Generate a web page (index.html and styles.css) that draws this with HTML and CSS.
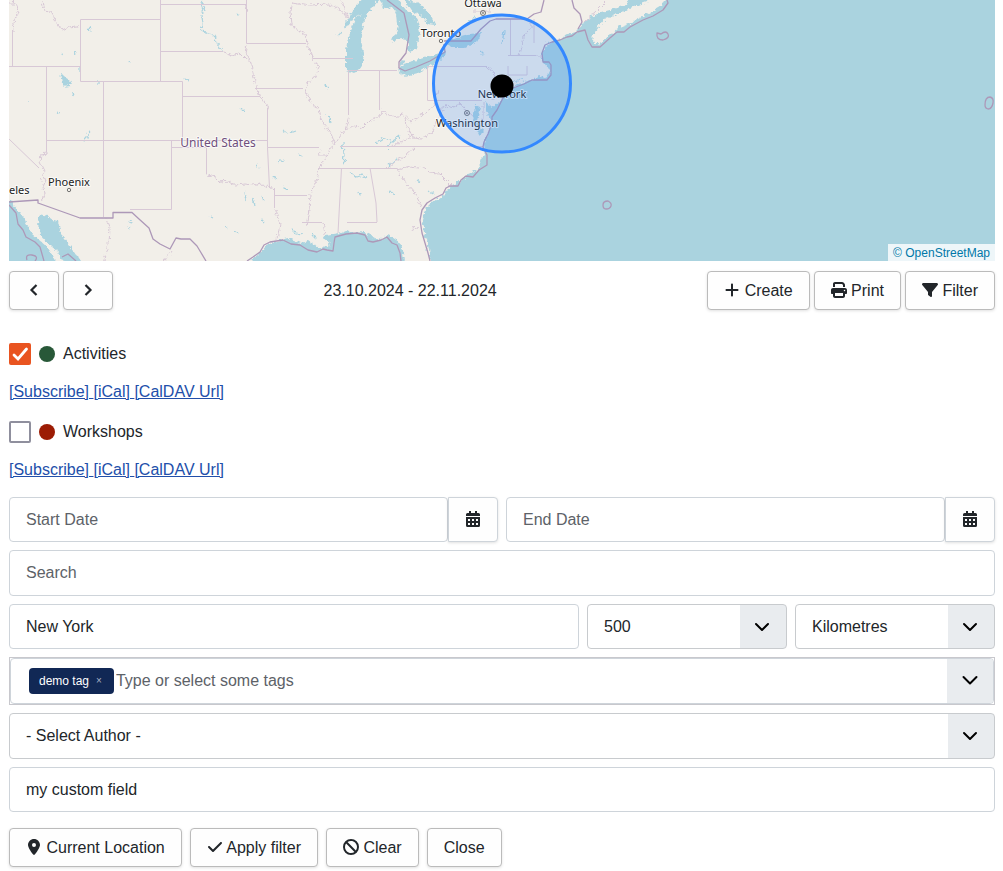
FILE: index.html
```html
<!DOCTYPE html>
<html lang="en">
<head>
<meta charset="utf-8">
<meta name="viewport" content="width=device-width, initial-scale=1">
<title>Event calendar</title>
<link rel="stylesheet" href="styles.css">
</head>
<body>
<main class="calendar">
  <section class="map" aria-label="Map">
    <svg class="map-canvas" viewBox="9 0 986 261" preserveAspectRatio="xMidYMid slice" role="img" aria-label="Search radius around New York">
      <defs>
        <!-- roughens coastlines and river borders -->
        <filter id="rough" filterUnits="userSpaceOnUse" x="-20" y="-20" width="1040" height="310">
          <feTurbulence type="turbulence" baseFrequency="0.18" numOctaves="2" seed="4" result="noise"/>
          <feDisplacementMap in="SourceGraphic" in2="noise" scale="5" xChannelSelector="R" yChannelSelector="G"/>
        </filter>
      </defs>
      <rect class="land" x="9" y="0" width="986" height="261"/>
      <!-- oceans -->
      <g class="water" filter="url(#rough)">
        <path d="M432 275L430 261 428 247 425 235 421 219 424 208 430 202 443 193 450 184 458 181 466 173 474 170 480 165 478 158 484 152 482 144 487 130 489 118 484 109 484 101 490 107 498 101 503 96 510 88 517 83 530 79 538 74 545 77 549 72 544 63 541 59 541 52 546 43 556 38 562 36 568 33 576 30 583 20 590 16 600 11 612 8 625 3 630 -9 650 -9 646 1 626 8 617 13 604 17 599 23 594 30 591 38 594 44 601 40 609 34 618 26 628 22 638 17 651 10 661 4 667 -9H1010V275Z"/>
        <path d="M236 275L247 261 257 254 265 244 275 240 287 237 299 242 308 240 318 247 330 244 322 238 325 234 338 232 345 229 351 232 361 230 374 237 379 239 387 233 397 240 402 250 404 275Z"/>
        <path d="M-5 199H9L16 208 24 219 31 233 44 244 55 261V275H-5Z"/>
        <path d="M38 213L46 215 52 219 57 220 60 233 66 241 72 249 80 261V275H66L63 261 55 249 46 242 39 234 37 222Z"/>
        <path d="M342 26L348 15 354 5 364 -4H380L371 6 363 19 359 39 363 55 359 67 352 72 345 69 345 49 347 35 354 17 361 13 352 16 345 27Z"/>
        <path d="M378 -4H395L405 9 415 16 419 30 415 47 408 51 406 38 399 37 392 41 389 37 395 32 397 23 396 13 391 6 382 7Z"/>
        <path d="M402 -4L420 4 428 13 434 24 427 23 419 14 411 10Z"/>
        <path d="M396 69L403 62 416 59 429 55 445 50 444 56 430 64 416 72 404 75Z"/>
        <path d="M443 40L455 36 467 33 480 32 475 41 463 46 449 46Z"/>
        <path d="M399 64L404 60 402 58 398 61Z"/>
        <path d="M59 71L63 75 68 79 70 82 66 87 61 82Z"/>
        <path d="M474 104L479 106 476 120 482 130 478 134 472 120Z"/>
      </g>
      <!-- lakes and rivers too small for an outline -->
      <g class="stream" filter="url(#rough)">
        <path d="M200 0l3 8-3 6 1 10-2 4 8 5 6 1 2 7 7 9M82 140l4-4 2-6M342 141l1 12-1 10 3-6M88 26l1 4M71 91l1 4M61 51l-1 3M27 100v3M56 111l2 1M78 66v4M97 79v4M74 51l1 2M127 60l1 2M183 77l4 2M235 12l2 2M241 108l2 2M255 164l3 3M243 191l2 8M251 197l2 7M260 194l2 5M209 215l2 1M224 225l2 3M234 230l3 2M127 220l4 1M126 226l3 2M281 129l5 3 8-3M276 161l7-2M271 176l5 2M282 185l4 4M297 153l4 2M260 218l3 3M337 35l3-4M325 84l2 2M327 114l2 7M374 142l8-5 7 2M385 147l5-6 8-7M348 171l7 5 6-2 4 2M358 190l2 6M388 190l5 3M415 179l3 2M428 190l5 3M424 233l3 9-1 8M387 165l9-8M290 228l5 5 7 1M310 233l5 5M466 20l8-4M478 50l4 4M512 81l10-4M503 30l-2 12"/>
      </g>
      <!-- state borders -->
      <g class="border">
        <path d="M160.500 0V81M160.500 4.500H246M80.500 19.500H160.500V81.500H80.500ZM9 66.500H80.500M46.500 66.500V152M103.500 81.500V217M103.500 81.500H182.500V140M160.500 51.500H223M182.500 96.500H260M46.500 140.500H268M171.500 140.500V209.500H130M171.500 147.500H206.500V174M12.500 30V66M9 139L39 168M246.500 0V43.500H306M255 88.500H303M267.500 108V147.500H319M267.500 147.500L269.500 188M274.500 188V208M274 195.500H307M313 58.500H353M348 70.500H397M348.500 70V115M379.500 70V110M427.500 66V100.500H482M427 66.500H487M340 146.500H483M318 168.500H397M341.500 168L338 233M370 168L376 203 377 222M302 222.500H322M347 222.500H377M510.500 19V55M508 66V75H527V66M508 55.500H536M534 19V43"/>
        <path filter="url(#rough)" d="M41 0l2 9 6 1 5 9 6 10 7-3 8-1 5-1M12 0l6 7-5 14-1 9M46 152l-6 1-1 8 4 8-2 9 4 0-3 7 1 9-5 7M223 51l8 3 7-2 6 6 6 5 3 14 5 19M246 43l-2 8 6 12M9 3h4M244 3l2 7M255 88l7 11 5 9M206 174l8 2 5 5 9-1 6 4 10-1 8 1 7-2 8 4 6 2M274 208l5 15-3 15M291 0l-2 11 1 13 14 9 3 13 5 12 6 9-5 10-6 4-3 9 6 11 7 6 2 10 6 8 5 9 3 8-9 14-6 10-3 14-6 13-1 16-3 16M348 115l-4 13-9 12-5 1M343 128l10-3 8 2 8-8 9-3 3-6 12 6 9-2 8 7 12-8 10-7 5-18M404 116l1 9 7 11 9 1 9-5 4-8 6-14 6-5M414 146l-11 10-9 4-8 7M391 145l12-6 9-6M396 168l9 14 9 10 6 13M396 168l13-3 15 2 4 4 10 1 12 12M410 230l2-4 5 2M322 222l2 11M438 110l7-6 8 2 6-4 7 9 6 3M487 66l7 6-3 10 5 10-6 8M518 55l4-19 8-10 0-7M536 55l5 0M340 0l7 17M291 1l18 3 19-1 12 6 6 8M105 218l3 8-1 17-4 16M170 249l-8 12M319 148l-3 6 8 0M482 100v20M471 10h18l6-10M583 21l12-11 10-10"/>
      </g>
      <!-- country and maritime borders -->
      <g class="border-strong">
        <path d="M9 202L38 200 38 203 80 218H113V212.500H132L139 219 149 228 153 239 160 244 170 249 176 238 181 239 190 239 197 246 200 251 206 261M387 0L404 13 409 35 406 53 399 62 399 68 405 71 416 67 430 61 445 52 444 44M444 41H471L481 29 490 21 496 19H527L534 14 541 12 544 0M572 0l2 8 6 6 2 8-4 7"/>
        <path d="M430 261L428 253 422 233 420 220 422 210 427 203 435 198 443 194 446 188 450 186 458 186 461 180 466 176 473 177 479 170 487 165 487 155 483 147 484 142 488 134 492 123 492 117 497 110 503 98 513 88 524 84 532 80 539 80 547 80 551 75 551 65 549 62 543 62 542 53 545 45 552 42 560 40 567 37 572 36 577 32 585 30 588 40 592 47 600 47 610 38 617 32 624 32 630 27 643 20 653 16 663 10 668 3 667 0"/>
        <path d="M247 261L253 257 260 252 264 245 270 242 283 240 291 244 300 245 308 250 317 252 323 249 327 250 333 251 334 243 335 237 346 234 357 233 365 235 368 241 373 242 381 240 387 237 392 243 397 245 400 253 401 261M9 205L16 213 18 224 23 230 26 237 35 242 40 247 44 261M27 260q-2-6 5-5t3 6M62 257l6-3 8 7"/>
        <path d="M657 33l4 1q5-4 7 0t-5 6q-7 0-6-7Z"/><path d="M603 205q0-4 5-4 4 2 3 5t-5 3q-3 0-3-4Z"/><path d="M985 105q0-8 5-8 4 1 3 6t-4 6q-4 0-4-4Z"/>
      </g>
      <g class="city-dot">
        <circle cx="69" cy="190" r="1.700"/><circle cx="441" cy="41" r="1.700"/><circle cx="483" cy="13" r="2.500"/><circle cx="467" cy="113" r="2.500"/>
        <circle cx="483" cy="13" r=".5"/><circle cx="467" cy="113" r=".5"/>
      </g>
      <g class="city">
        <text x="69" y="186">Phoenix</text>
        <text x="9" y="194" text-anchor="start" class="city-start">eles</text>
        <text x="483" y="7">Ottawa</text>
        <text x="441" y="37">Toronto</text>
        <text x="502" y="98">New York</text>
        <text x="467" y="127">Washington</text>
        <text class="country" x="218" y="147">United States</text>
      </g>
      <circle class="radius" cx="502" cy="83.500" r="68.500"/>
      <circle class="marker" cx="502" cy="86" r="11.500"/>
    </svg>
    <a class="attribution" href="#">© OpenStreetMap</a>
  </section>

  <header class="toolbar">
    <div class="group">
      <button class="btn btn-icon" type="button" aria-label="Previous"><svg class="icon" viewBox="0 0 16 16"><path class="line" d="M10.500 3L5.500 8l5 5"/></svg></button>
      <button class="btn btn-icon" type="button" aria-label="Next"><svg class="icon" viewBox="0 0 16 16"><path class="line" d="M5.500 3l5 5-5 5"/></svg></button>
    </div>
    <div>23.10.2024 - 22.11.2024</div>
    <div class="group">
      <button class="btn" type="button"><svg class="icon" viewBox="0 0 448 512"><path d="M256 80c0-17.700-14.300-32-32-32s-32 14.300-32 32V224H48c-17.700 0-32 14.300-32 32s14.300 32 32 32H192V432c0 17.700 14.300 32 32 32s32-14.300 32-32V288H400c17.700 0 32-14.300 32-32s-14.300-32-32-32H256V80z"/></svg> Create</button>
      <button class="btn" type="button"><svg class="icon" viewBox="0 0 512 512"><path d="M128 0C92.700 0 64 28.700 64 64v96h64V64H354.700L384 93.300V160h64V93.300c0-17-6.700-33.300-18.700-45.300L400 18.700C388 6.700 371.700 0 354.700 0H128zM384 352v96H128V352H384zm64 32h32c17.700 0 32-14.300 32-32V256c0-35.300-28.700-64-64-64H64c-35.300 0-64 28.700-64 64v96c0 17.700 14.300 32 32 32H64v64c0 35.300 28.700 64 64 64H384c35.300 0 64-28.700 64-64V384zM432 248a24 24 0 1 1 0 48 24 24 0 1 1 0-48z"/></svg> Print</button>
      <button class="btn" type="button"><svg class="icon" viewBox="0 0 512 512"><path d="M3.900 54.900C10.500 40.900 24.500 32 40 32H472c15.500 0 29.500 8.900 36.100 22.900s4.600 30.500-5.200 42.500L320 320.900V448c0 12.100-6.800 23.200-17.700 28.600s-23.800 4.300-33.500-3l-64-48c-8.100-6-12.800-15.500-12.800-25.600V320.900L9 97.300C-.7 85.400-2.800 68.800 3.900 54.900z"/></svg> Filter</button>
    </div>
  </header>

  <section class="sources" aria-label="Calendars">
    <label class="source"><input class="check" type="checkbox" checked><span class="dot dot-green"></span>Activities</label>
    <div class="links"><a href="#">[Subscribe] </a><a href="#">[iCal] </a><a href="#">[CalDAV Url]</a></div>
    <label class="source"><input class="check" type="checkbox"><span class="dot dot-red"></span>Workshops</label>
    <div class="links"><a href="#">[Subscribe] </a><a href="#">[iCal] </a><a href="#">[CalDAV Url]</a></div>
  </section>

  <form class="filters">
    <div class="row">
      <div class="date">
        <input class="field" type="text" placeholder="Start Date" aria-label="Start Date">
        <button class="btn btn-icon btn-date" type="button" aria-label="Choose start date"><svg class="icon" viewBox="0 0 14 16"><path fill-rule="evenodd" d="M3 0h2v2h4V0h2v2h1.500Q14 2 14 3.500V5H0V3.500Q0 2 1.500 2H3ZM0 6h14v8.500Q14 16 12.500 16h-11Q0 16 0 14.500ZM2 8v2h2V8ZM6 8v2h2V8ZM10 8v2h2V8ZM2 12v2h2v-2ZM6 12v2h2v-2ZM10 12v2h2v-2Z"/></svg></button>
      </div>
      <div class="date">
        <input class="field" type="text" placeholder="End Date" aria-label="End Date">
        <button class="btn btn-icon btn-date" type="button" aria-label="Choose end date"><svg class="icon" viewBox="0 0 14 16"><path fill-rule="evenodd" d="M3 0h2v2h4V0h2v2h1.500Q14 2 14 3.500V5H0V3.500Q0 2 1.500 2H3ZM0 6h14v8.500Q14 16 12.500 16h-11Q0 16 0 14.500ZM2 8v2h2V8ZM6 8v2h2V8ZM10 8v2h2V8ZM2 12v2h2v-2ZM6 12v2h2v-2ZM10 12v2h2v-2Z"/></svg></button>
      </div>
    </div>
    <input class="field field-tall" type="text" placeholder="Search" aria-label="Search">
    <div class="row">
      <input class="field" type="text" value="New York" aria-label="Location">
      <select class="field select select-short" aria-label="Radius"><option>500</option></select>
      <select class="field select select-short" aria-label="Unit"><option>Kilometres</option></select>
    </div>
    <div class="tags">
      <div class="tags-inner">
        <span class="tag">demo tag<button class="tag-remove" type="button" aria-label="Remove demo tag">×</button></span>
        <input class="tags-input" type="text" placeholder="Type or select some tags" aria-label="Tags">
        <button class="tags-toggle" type="button" aria-label="Show tags"><svg class="icon" viewBox="0 0 16 16"><path class="caret" d="M1.500 5L8 11.500 14.500 5"/></svg></button>
      </div>
    </div>
    <select class="field field-tall select" aria-label="Author"><option>- Select Author -</option></select>
    <input class="field" type="text" value="my custom field" aria-label="Custom field">
    <div class="actions">
      <button class="btn" type="button"><svg class="icon" viewBox="0 0 384 512"><path d="M215.700 499.200C267 435 384 279.400 384 192C384 86 298 0 192 0S0 86 0 192c0 87.400 117 243 168.300 307.200c12.300 15.300 35.100 15.300 47.400 0zM192 128a64 64 0 1 1 0 128 64 64 0 1 1 0-128z"/></svg> Current Location</button>
      <button class="btn" type="button"><svg class="icon" viewBox="0 0 448 512"><path d="M438.600 105.400c12.500 12.500 12.500 32.800 0 45.300l-256 256c-12.500 12.500-32.800 12.500-45.300 0l-128-128c-12.500-12.500-12.500-32.800 0-45.300s32.800-12.500 45.300 0L160 338.700 393.400 105.400c12.500-12.500 32.800-12.500 45.300 0z"/></svg> Apply filter</button>
      <button class="btn" type="button"><svg class="icon" viewBox="0 0 512 512"><path d="M367.200 412.500L99.500 144.800C77.100 176.100 64 214.500 64 256c0 106 86 192 192 192c41.500 0 79.900-13.100 111.200-35.500zm45.300-45.300C434.900 335.900 448 297.500 448 256c0-106-86-192-192-192c-41.500 0-79.900 13.100-111.200 35.500L412.500 367.200zM0 256a256 256 0 1 1 512 0A256 256 0 1 1 0 256z"/></svg> Clear</button>
      <button class="btn" type="button">Close</button>
    </div>
  </form>
</main>
</body>
</html>
```
FILE: styles.css
```css
* {
  box-sizing: border-box;
}

body {
  margin: 0;
  background: #fff;
  color: #22262a;
  font: 16px/24px "Liberation Sans", Arial, sans-serif;
}

input,
select,
button {
  margin: 0;
  color: inherit;
  font: inherit;
}

.calendar {
  padding: 0 8px 4px 9px;
}

/* Map */
.map {
  position: relative;
  height: 261px;
  overflow: hidden;
}

.map-canvas {
  display: block;
  width: 100%;
  height: 100%;
}

.land { fill: #f2efe9; }
.water { fill: #aad3df; }

.stream,
.border,
.border-strong {
  fill: none;
  stroke-linejoin: round;
}

.stream { stroke: #aad3df; stroke-width: 1.2; }
.border { stroke: #d8c8d6; }
.border-strong { stroke: #ad98b8; stroke-width: 1.3; }

.city-dot {
  fill: none;
  stroke: #555;
  stroke-width: 0.8;
}

.city {
  fill: #222;
  stroke: #fff;
  stroke-opacity: 0.7;
  stroke-width: 2;
  stroke-linejoin: round;
  paint-order: stroke;
  font: 11px "Noto Sans", sans-serif;
  text-anchor: middle;
}

.city-start {
  text-anchor: start;
}

.country {
  fill: #704f7c;
  font-size: 12px;
}

.radius {
  fill: #38f;
  fill-opacity: 0.2;
  stroke: #38f;
  stroke-width: 3;
}

.attribution {
  position: absolute;
  right: 0;
  bottom: 0;
  padding: 2px 5px 0;
  background: rgba(255, 255, 255, 0.8);
  color: #0078a8;
  font-size: 12px;
  line-height: 15px;
  text-decoration: none;
}

/* Buttons */
.btn {
  height: 39px;
  padding: 0 16px;
  border: 1px solid #bbb;
  border-radius: 4px;
  background: #fefefe;
  box-shadow: 0 1px 3px rgba(0, 0, 0, 0.12);
  white-space: nowrap;
}

.btn-icon {
  flex: none;
  width: 50px;
  padding: 0;
}

.icon {
  width: 16px;
  height: 16px;
  fill: currentColor;
  vertical-align: -2px;
}

.line {
  fill: none;
  stroke: currentColor;
  stroke-width: 2.2;
}

.toolbar {
  display: flex;
  align-items: center;
  justify-content: space-between;
  padding: 10px 0 31px;
}

.group {
  display: flex;
  gap: 4px;
}

/* Calendars */
.source {
  display: flex;
  align-items: center;
  width: max-content;
  height: 26px;
}

.check {
  appearance: none;
  width: 22px;
  height: 22px;
  border: 2px solid #8f8f9d;
  border-radius: 2px;
  background: #fff;
}

.check:checked {
  border-color: #e95420;
  background: #e95420 url("data:image/svg+xml,%3Csvg xmlns='http://www.w3.org/2000/svg' viewBox='0 0 18 18'%3E%3Cpath d='M3 10l4 4L15.500 4' fill='none' stroke='white' stroke-width='2.800' stroke-linecap='round'/%3E%3C/svg%3E") center / 18px 18px;
}

.dot {
  width: 16px;
  height: 16px;
  margin: 0 8px;
  border-radius: 50%;
}

.dot-green { background: #285838; }
.dot-red { background: #9c1c04; }

.links {
  padding: 13px 0 15px;
}

.links a {
  color: #224faa;
  text-decoration: underline;
}

/* Filters */
.filters {
  display: flex;
  flex-direction: column;
  gap: 8px;
}

.row {
  display: flex;
  gap: 8px;
}

.date {
  display: flex;
  flex: 1;
}

.field {
  width: 100%;
  min-width: 0;
  height: 45px;
  padding: 0 16px;
  border: 1px solid #ced4da;
  border-radius: 4px;
  background-color: #fff;
}

.field-tall { height: 46px; }

.field::placeholder,
.tags-input::placeholder {
  color: #5d6268;
  opacity: 1;
}

.btn-date {
  height: 45px;
  border-color: #ced4da;
  border-radius: 0 4px 4px 0;
}

.select {
  appearance: none;
  border-color: #c8cbce;
  background-image:
    url("data:image/svg+xml,%3Csvg xmlns='http://www.w3.org/2000/svg' viewBox='0 0 16 16'%3E%3Cpath d='M2 5l6 6 6-6' fill='none' stroke='black' stroke-width='2' stroke-linecap='round' stroke-linejoin='round'/%3E%3C/svg%3E"),
    linear-gradient(#e9ecef, #e9ecef);
  background-position: right 16px center, right center;
  background-repeat: no-repeat;
  background-size: 16px 16px, 46px 100%;
}

.select-short {
  flex: none;
  width: 200px;
}

.tags {
  border: 1px solid #c8c8cd;
}

.tags-inner {
  display: flex;
  align-items: center;
  height: 46px;
  padding-left: 18px;
  border: 1px solid #ced4da;
  border-radius: 4px;
  overflow: hidden;
}

.tag {
  display: flex;
  align-items: center;
  gap: 7px;
  height: 26px;
  padding: 0 12px 0 10px;
  border-radius: 4px;
  background: #112855;
  color: #fff;
  font-size: 12px;
}

.tag-remove {
  padding: 0;
  border: 0;
  background: none;
  color: #a9b3c6;
  font-size: 10px;
}

.tags-input {
  flex: 1;
  min-width: 0;
  padding: 0 2px;
  border: 0;
  background: none;
}

.tags-toggle {
  width: 46px;
  height: 100%;
  padding: 0;
  border: 0;
  background: #e9ecef;
}

.caret {
  fill: none;
  stroke: #000;
  stroke-width: 2;
  stroke-linecap: round;
  stroke-linejoin: round;
}

.actions {
  display: flex;
  flex-wrap: wrap;
  gap: 8px;
  padding-top: 8px;
}
```
